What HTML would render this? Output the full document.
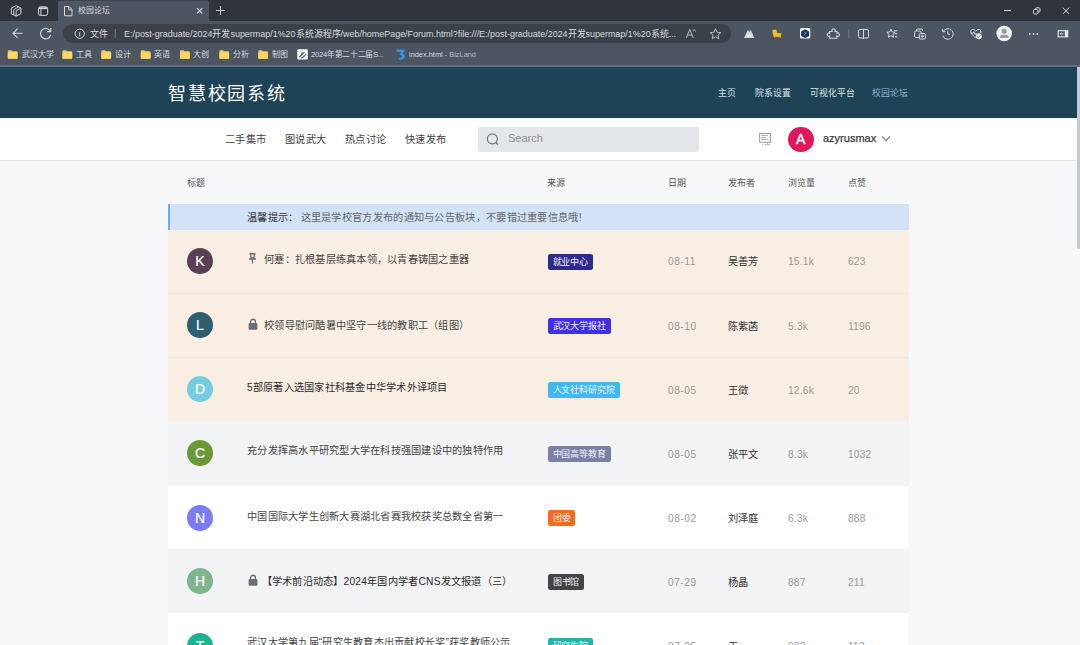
<!DOCTYPE html>
<html lang="zh-CN"><head><meta charset="utf-8">
<style>
*{margin:0;padding:0;box-sizing:border-box}
html,body{width:1080px;height:645px;overflow:hidden;background:#f7f8fa;font-family:"Liberation Sans",sans-serif}
.abs{position:absolute}
.ui{color:#d9dcdf;font-size:8px;white-space:nowrap;position:absolute;line-height:10px}
#hdr{position:absolute;left:0;top:66.8px;width:1076.5px;height:50.8px;background:#1f4356}
#nav{position:absolute;left:0;top:117.6px;width:1076px;height:43.9px;background:#fff;border-bottom:1px solid #e3e5e9}
#sb{position:absolute;left:1076.5px;top:66.8px;width:3.5px;height:182.7px;background:#c5c8cd;border-radius:0 0 2px 2px}
.t{position:absolute;white-space:nowrap;line-height:1}
.row{position:absolute;left:168px;width:741px}
.av{position:absolute;left:19px;width:26px;height:26px;border-radius:50%;color:#fff;font-size:14px;text-align:center;line-height:26px;-webkit-text-stroke:0.2px #fff}
.tag{position:absolute;left:380px;height:16px;border-radius:2.5px;color:#f4f4f8;font-size:9px;letter-spacing:-0.1px;line-height:16px;padding:0 4.6px;white-space:nowrap}
.ttl{position:absolute;left:79px;font-size:10.2px;letter-spacing:0.25px;color:#444;white-space:nowrap;line-height:12px}
.dt{position:absolute;left:500px;margin-top:1px;letter-spacing:0.5px;font-size:10.2px;color:#999;line-height:12px}
.au{position:absolute;left:560px;margin-top:1px;font-size:10.2px;color:#333;line-height:12px}
.vw{position:absolute;left:620px;margin-top:1px;letter-spacing:0.2px;font-size:10.2px;color:#999;line-height:12px}
.lk{position:absolute;left:680px;margin-top:1px;letter-spacing:0.2px;font-size:10.2px;color:#999;line-height:12px}
</style></head><body>
<svg class="abs" style="left:0;top:0" width="1080" height="67" viewBox="0 0 1080 67">
 <rect width="1080" height="21" fill="#30353d"/>
 <rect y="21" width="1080" height="44" fill="#4d5562"/>
 <path d="M56.5,21 Q58,21 58,19.5 V2 Q58,0.5 59.5,0.5 H207.5 Q209,0.5 209,2 V19.5 Q209,21 210.5,21 Z" fill="#4d5562"/>
 <rect x="63" y="24" width="668" height="19" rx="9.5" fill="#3b4049"/>
 <rect y="65" width="1080" height="2" fill="#666c76"/>
 <g fill="none" stroke="#d5d8dc" stroke-width="1">
  <!-- workspaces -->
  <path d="M16.1,5.6 L20.9,8.1 V13.7 L16.1,16.1 L11.3,13.7 V8.1 Z"/>
  <path d="M13.7,14.9 V9.6 L18.5,7.1 M16.1,16 V10.8 L20.8,8.3" stroke-width="0.9"/>
  <!-- tab actions -->
  <rect x="38.5" y="6.8" width="9.2" height="8.6" rx="2"/>
  <path d="M39,8.2 H47.2" stroke-width="1.8"/>
  <path d="M40.9,9 V15"/>
  <!-- page icon -->
  <path d="M64.5,6.5 H69 L72,9.5 V15.8 H64.5 Z M68.8,6.5 V9.8 H72"/>
  <!-- tab close -->
  <path d="M197,8.2 L202.3,13.5 M202.3,8.2 L197,13.5" stroke="#cfd2d6" stroke-width="1.1"/>
  <!-- new tab -->
  <path d="M220.5,6 V15 M216,10.5 H225" stroke="#c9ccd0" stroke-width="1"/>
  <!-- window controls -->
  <path d="M1004,10.5 H1011"/>
  <rect x="1033.5" y="9.5" width="4.5" height="4.5" rx="1.2"/>
  <path d="M1035.5,9.5 V8.8 Q1035.5,7.8 1036.5,7.8 H1039 Q1040,7.8 1040,8.8 V11.2 Q1040,12 1039,12 H1038"/>
  <path d="M1062.8,7.6 L1069.2,14 M1069.2,7.6 L1062.8,14"/>
  <!-- back -->
  <path d="M22.5,33.3 H13 M17.6,28.7 L13,33.3 L17.6,37.9" stroke-width="1.1"/>
  <!-- refresh -->
  <path d="M50.3,31.2 A5.2,5.2 0 1 0 50.7,35" stroke-width="1.1"/>
  <path d="M50.8,28 V31.6 H47.2" stroke-width="1.1"/>
  <!-- info -->
  <circle cx="79.7" cy="33.7" r="4.6"/>
  <path d="M79.7,32.3 V36.3"/>
  <!-- read aloud -->
  <path d="M686.3,38 L689.8,29.3 L693.3,38 M687.6,35 H692" stroke="#b9bdc3"/>
  <path d="M693.2,31.3 L694.2,29.5 L695.5,31.5" stroke="#b9bdc3" stroke-width="0.8"/>
  <!-- star -->
  <path d="M715.5,28.8 L717.1,32.3 L720.9,32.6 L718,35.1 L718.9,38.8 L715.5,36.8 L712.1,38.8 L713,35.1 L710.1,32.6 L713.9,32.3 Z" stroke="#b9bdc3"/>
  <!-- puzzle -->
  <path d="M829.6,31.5 H832.2 A1.7,1.7 0 1 1 835,31.5 H836.9 V33.2 A1.7,1.7 0 1 1 836.9,36 V38.3 H829.6 V36.1 A1.6,1.6 0 1 1 829.6,33.3 Z" stroke="#d5d8dc" stroke-width="1.05"/>
  <path d="M848.7,29 V38.5" stroke="#6c737d"/>
  <!-- split screen -->
  <rect x="858.5" y="29.5" width="10" height="8.5" rx="1.5"/>
  <path d="M863.5,28.8 V38.8"/>
  <!-- favorites -->
  <path d="M891,29.2 L892.3,32 L895.2,32.3 L893,34.3 L893.6,37.3 L891,35.8 L888.4,37.3 L889,34.3 L886.8,32.3 L889.7,32 Z"/>
  <path d="M894,30.8 H897.3 M895,33.8 H897.3 M895,36.8 H897.3"/>
  <!-- collections -->
  <path d="M916.5,31 V30 Q916.5,29 917.5,29 H921.5 Q922.5,29 922.5,30 V31"/>
  <rect x="914.6" y="31" width="6.5" height="6.5" rx="1.2"/>
  <rect x="919.3" y="33.5" width="6" height="5.5" rx="1" fill="#4d5562"/>
  <path d="M922.3,34.6 V37.9 M920.6,36.25 H924"/>
  <!-- history -->
  <path d="M943.2,31.5 A5.3,5.3 0 1 1 942.8,35.5"/>
  <path d="M942.6,29 V31.8 H945.4"/>
  <path d="M947.8,31 V34.2 H950"/>
  <!-- health -->
  <path d="M975.8,31.2 Q974,28.5 971.8,29.6 Q969.6,31 971.3,33.8 L975.8,38 L977,36.8 M975.8,31.2 Q977.6,28.5 979.8,29.6 Q981.5,30.7 980.8,33" />
  <path d="M970.8,33.2 H973 L974,31.8 L975.2,34.6 L976.2,33.2"/>
 </g>
 <circle cx="978.8" cy="36.3" r="3" fill="#e6e8ea"/>
 <path d="M977.4,36.4 L978.4,37.3 L980.2,35.4" fill="none" stroke="#4d5562" stroke-width="0.9"/>
 <!-- profile -->
 <circle cx="1004.2" cy="33.5" r="7.8" fill="#f2f2f2"/>
 <circle cx="1004.2" cy="31.2" r="2.6" fill="#9b9b9b"/>
 <path d="M999.8,37.9 Q1000,34.7 1002,34.7 H1006.4 Q1008.4,34.7 1008.6,37.9 Z" fill="#9b9b9b"/>
 <!-- more -->
 <g fill="#d5d8dc"><circle cx="1029.8" cy="34" r="0.9"/><circle cx="1033.6" cy="34" r="0.9"/><circle cx="1037.4" cy="34" r="0.9"/></g>
 <!-- sidebar -->
 <rect x="1057.6" y="30.1" width="10.7" height="7.3" fill="#e8eaec"/>
 <rect x="1058.8" y="31.2" width="6" height="5.1" fill="#4d5562"/>
 <path d="M1063.5,33.75 H1060.2 M1061.5,32.5 L1060.2,33.75 L1061.5,35" stroke="#e8eaec" stroke-width="0.8" fill="none"/>
 <!-- mountain -->
 <path d="M744,37.9 L747.9,29.8 L749.25,32.2 L750.6,29.8 L754.4,37.9 Z" fill="#d6d7d9"/>
 <path d="M747,36.5 L749.2,33.5 L751.5,36.5 Z" fill="#eeeeef"/>
 <!-- duck -->
 <path d="M772.3,29.9 L776.4,29.6 L777,33 L782,33.3 L780.6,35 L781.3,37.2 L777,36.8 L774,37.3 L773.2,35 L772.5,32.6 Z" fill="#f0c21a"/>
 <path d="M773.4,35.6 L774.2,37.3 L777,36.8 L781.3,37.2" fill="none" stroke="#d98a1a" stroke-width="0.8"/>
 <!-- blue ext -->
 <rect x="800" y="28" width="10.3" height="10.4" rx="1.5" fill="#f4f4f6"/>
 <path d="M805.15,29.3 L809.1,31.5 V35.9 L805.15,38 L801.2,35.9 V31.5 Z" fill="#183358"/>
 <path d="M804,31.8 L806.2,33.4 L804,35" stroke="#9fb4d6" stroke-width="0.7" fill="none"/>
 <!-- folders -->
 <g>
 <path d="M7.8,51.2 Q7.8,50.3 8.7,50.3 H11.4 L12.3,51.3 H16.6 Q17.5,51.3 17.5,52.2 V57.8 Q17.5,58.7 16.6,58.7 H8.7 Q7.8,58.7 7.8,57.8 Z" fill="#f5c84f"/><rect x="7.8" y="52.3" width="9.7" height="6.4" rx="0.8" fill="#fcd866"/>
<path d="M62.5,51.2 Q62.5,50.3 63.4,50.3 H66.1 L67.0,51.3 H71.3 Q72.2,51.3 72.2,52.2 V57.8 Q72.2,58.7 71.3,58.7 H63.4 Q62.5,58.7 62.5,57.8 Z" fill="#f5c84f"/><rect x="62.5" y="52.3" width="9.7" height="6.4" rx="0.8" fill="#fcd866"/>
<path d="M101.4,51.2 Q101.4,50.3 102.30000000000001,50.3 H105.0 L105.9,51.3 H110.2 Q111.10000000000001,51.3 111.10000000000001,52.2 V57.8 Q111.10000000000001,58.7 110.2,58.7 H102.30000000000001 Q101.4,58.7 101.4,57.8 Z" fill="#f5c84f"/><rect x="101.4" y="52.3" width="9.7" height="6.4" rx="0.8" fill="#fcd866"/>
<path d="M140.8,51.2 Q140.8,50.3 141.70000000000002,50.3 H144.4 L145.3,51.3 H149.60000000000002 Q150.5,51.3 150.5,52.2 V57.8 Q150.5,58.7 149.60000000000002,58.7 H141.70000000000002 Q140.8,58.7 140.8,57.8 Z" fill="#f5c84f"/><rect x="140.8" y="52.3" width="9.7" height="6.4" rx="0.8" fill="#fcd866"/>
<path d="M180,51.2 Q180,50.3 180.9,50.3 H183.6 L184.5,51.3 H188.8 Q189.7,51.3 189.7,52.2 V57.8 Q189.7,58.7 188.8,58.7 H180.9 Q180,58.7 180,57.8 Z" fill="#f5c84f"/><rect x="180" y="52.3" width="9.7" height="6.4" rx="0.8" fill="#fcd866"/>
<path d="M219.4,51.2 Q219.4,50.3 220.3,50.3 H223.0 L223.9,51.3 H228.20000000000002 Q229.1,51.3 229.1,52.2 V57.8 Q229.1,58.7 228.20000000000002,58.7 H220.3 Q219.4,58.7 219.4,57.8 Z" fill="#f5c84f"/><rect x="219.4" y="52.3" width="9.7" height="6.4" rx="0.8" fill="#fcd866"/>
<path d="M258.3,51.2 Q258.3,50.3 259.2,50.3 H261.90000000000003 L262.8,51.3 H267.1 Q268.0,51.3 268.0,52.2 V57.8 Q268.0,58.7 267.1,58.7 H259.2 Q258.3,58.7 258.3,57.8 Z" fill="#f5c84f"/><rect x="258.3" y="52.3" width="9.7" height="6.4" rx="0.8" fill="#fcd866"/>
 </g>
 <rect x="297.3" y="49.3" width="10.5" height="10.3" rx="1" fill="#f8f8f8"/>
 <path d="M299,56.5 Q301,53 305,52 Q303,55 299.5,57.5 Z" fill="#d82a2a"/>
 <path d="M300.5,58 Q303.5,56.5 306.3,53.5 Q305.5,57 301.5,58.5 Z" fill="#2a5fd8"/>
 <circle cx="302.5" cy="53.2" r="1.2" fill="#2aa84a"/>
 <path d="M396,49.5 H404 Q405.6,49.6 404.4,51.2 L402.2,53.8 Q405.8,54.5 404.5,57.3 Q403,59.8 399.3,59.8 L398.2,58.3 Q401.8,58.4 402.3,56.6 Q402.6,55.2 399.2,55 L401.6,51.8 H397.5 Z" fill="#2aa0e8"/>
</svg>
<div class="ui" style="left:78px;top:6px;width:32.02px;text-align:justify;text-align-last:justify">校园论坛</div>
<div class="ui" style="left:90px;top:29px;font-size:9px;width:18.02px;text-align:justify;text-align-last:justify">文件</div>
<div class="ui" style="left:114px;top:28px;font-size:9px;color:#8d939b">|</div>
<div class="ui" style="left:124px;top:29px;font-size:8.95px">E:/post-graduate/2024开发supermap/1%20系统源程序/web/homePage/Forum.html?file:///E:/post-graduate/2024开发supermap/1%20系统...</div>
<div class="ui" style="left:22px;top:50px;width:32.02px;text-align:justify;text-align-last:justify">武汉大学</div>
<div class="ui" style="left:76px;top:50px;width:16.02px;text-align:justify;text-align-last:justify">工具</div>
<div class="ui" style="left:115px;top:50px;width:16.02px;text-align:justify;text-align-last:justify">设计</div>
<div class="ui" style="left:154px;top:50px;width:16.02px;text-align:justify;text-align-last:justify">英语</div>
<div class="ui" style="left:193px;top:50px;width:16.02px;text-align:justify;text-align-last:justify">大创</div>
<div class="ui" style="left:233px;top:50px;width:16.02px;text-align:justify;text-align-last:justify">分析</div>
<div class="ui" style="left:272px;top:50px;width:16.02px;text-align:justify;text-align-last:justify">制图</div>
<div class="ui" style="left:311px;top:50px;font-size:7.7px;letter-spacing:-0.3px;width:72.46px;text-align:justify;text-align-last:justify">2024年第二十二届S...</div>
<div class="ui" style="left:409px;top:50px;font-size:7.4px">index.html <span style="color:#b9bdc3">- BizLand</span></div>

<!-- page header -->
<div id="hdr"></div>
<div class="t" style="left:168px;top:84.5px;font-size:18px;letter-spacing:1.8px;color:#fff;width:118.83px;text-align:justify;text-align-last:justify">智慧校园系统</div>
<div class="t" style="left:718px;top:89px;font-size:8.8px;color:#dde3e7;width:18.02px;text-align:justify;text-align-last:justify">主页</div>
<div class="t" style="left:755px;top:89px;font-size:8.8px;color:#dde3e7;width:36.02px;text-align:justify;text-align-last:justify">院系设置</div>
<div class="t" style="left:810px;top:89px;font-size:8.8px;color:#dde3e7;width:45.02px;text-align:justify;text-align-last:justify">可视化平台</div>
<div class="t" style="left:872px;top:89px;font-size:8.8px;color:#8cb8d4;width:36.02px;text-align:justify;text-align-last:justify">校园论坛</div>

<div id="nav"></div>
<div class="t" style="left:225px;top:134.5px;font-size:10.2px;letter-spacing:0.25px;color:#3e3e3e;width:41.02px;text-align:justify;text-align-last:justify">二手集市</div>
<div class="t" style="left:285px;top:134.5px;font-size:10.2px;letter-spacing:0.25px;color:#3e3e3e;width:41.02px;text-align:justify;text-align-last:justify">图说武大</div>
<div class="t" style="left:345px;top:134.5px;font-size:10.2px;letter-spacing:0.25px;color:#3e3e3e;width:41.02px;text-align:justify;text-align-last:justify">热点讨论</div>
<div class="t" style="left:405px;top:134.5px;font-size:10.2px;letter-spacing:0.25px;color:#3e3e3e;width:41.02px;text-align:justify;text-align-last:justify">快速发布</div>
<div class="abs" style="left:478px;top:127px;width:221px;height:25px;background:#e3e7ea;border-radius:2px"></div>
<div class="t" style="left:508px;top:133px;font-size:11px;color:#8a8f94">Search</div>
<svg class="abs" style="left:485px;top:132px" width="16" height="14" viewBox="0 0 16 14"><circle cx="7.3" cy="6.9" r="5" fill="none" stroke="#6f757b" stroke-width="1.1"/><path d="M10.8,10.5 L12.8,12.5" stroke="#6f757b" stroke-width="1.2"/></svg>
<svg class="abs" style="left:754px;top:128px" width="22" height="22" viewBox="0 0 22 22"><rect x="5.6" y="5.5" width="10.8" height="8.8" fill="none" stroke="#9ea2a6" stroke-width="1.1"/><path d="M7.2,7.5 H14 M7.2,9.6 H12 M7.2,11.4 H14" stroke="#a9adb1" stroke-width="0.9"/><path d="M12.8,14.5 L14,16.3 M8,16.6 H9.5 M10.8,16.6 H16" stroke="#a9adb1" stroke-width="0.9" fill="none"/></svg>
<svg class="abs" style="left:880px;top:134px" width="12" height="9" viewBox="0 0 12 9"><path d="M2,2.5 L6,6.5 L10,2.5" fill="none" stroke="#7d8287" stroke-width="1.1"/></svg>
<div class="abs" style="left:788px;top:126.5px;width:25.5px;height:25.5px;border-radius:50%;background:#e0175b;color:#fff;font-size:14px;line-height:25.5px;text-align:center;-webkit-text-stroke:0.4px #fff">A</div>
<div class="t" style="left:823px;top:133.3px;font-size:11px;color:#3a3d40;-webkit-text-stroke:0.25px #3a3d40">azyrusmax</div>


<div id="sb"></div>

<!-- table header -->
<div class="t" style="left:187px;top:179px;font-size:9px;color:#555;width:18.02px;text-align:justify;text-align-last:justify">标题</div>
<div class="t" style="left:547px;top:179px;font-size:9px;color:#555;width:18.02px;text-align:justify;text-align-last:justify">来源</div>
<div class="t" style="left:668px;top:179px;font-size:9px;color:#555;width:18.02px;text-align:justify;text-align-last:justify">日期</div>
<div class="t" style="left:728px;top:179px;font-size:9px;color:#555;width:27.02px;text-align:justify;text-align-last:justify">发布者</div>
<div class="t" style="left:788px;top:179px;font-size:9px;color:#555;width:27.02px;text-align:justify;text-align-last:justify">浏览量</div>
<div class="t" style="left:848px;top:179px;font-size:9px;color:#555;width:18.02px;text-align:justify;text-align-last:justify">点赞</div>

<!-- notice -->
<div class="abs" style="left:168.2px;top:204.3px;width:740.8px;height:25.4px;background:#d2e3f8;border-left:2px solid #78a8e6"></div>
<div class="t" style="left:247px;top:211.8px;font-size:10.2px;letter-spacing:0.3px;color:#333;line-height:12px;width:334.75px;text-align:justify;text-align-last:justify">温馨提示：<span style="color:#666;margin-left:2px">这里是学校官方发布的通知与公告板块，不要错过重要信息哦!</span></div>

<div class="row" style="top:229.8px;height:64.2px;background:#f9eee3;border-bottom:1px solid #f3e8dd">
 <div class="av" style="top:18px;background:#5a4055">K</div>
 <div class="ttl" style="top:23.5px;width:222.02px;text-align:justify;text-align-last:justify"><svg width="9" height="11" viewBox="0 0 9 11" style="vertical-align:-1px;margin-right:7px;margin-left:1px;vertical-align:-1px"><path d="M1.5,0.8 H7.5 M2.8,0.8 V5 H6.2 V0.8 M1,6 H8 M4.5,6 V10.5" fill="none" stroke="#6e7276" stroke-width="1.4"/></svg>何蹇：扎根基层练真本领，以青春铸国之重器</div>
 <div class="tag" style="top:24px;background:#2d2a8a;width:44.82px;text-align:justify;text-align-last:justify">就业中心</div>
 <div class="dt" style="top:25px">08-11</div><div class="au" style="top:25px;width:30.02px;text-align:justify;text-align-last:justify">吴善芳</div><div class="vw" style="top:25px">15.1k</div><div class="lk" style="top:25px">623</div>
</div>
<div class="row" style="top:294px;height:64px;background:#f9eee3;border-bottom:1px solid #e7e8e8">
 <div class="av" style="top:18px;background:#2d5f70">L</div>
 <div class="ttl" style="top:24px;width:222.02px;text-align:justify;text-align-last:justify"><svg width="10" height="12" viewBox="0 0 10 12" style="vertical-align:-1px;margin-left:1px;margin-right:6px"><path d="M2.6,5.5 V3.6 A2.4,2.4 0 0 1 7.4,3.6 V5.5" fill="none" stroke="#6b6f73" stroke-width="1.4"/><rect x="0.6" y="5" width="8.8" height="6.8" rx="1.1" fill="#6b6f73"/></svg>校领导慰问酷暑中坚守一线的教职工（组图）</div>
 <div class="tag" style="top:23.8px;background:#3f2fe6;width:62.61px;text-align:justify;text-align-last:justify">武汉大学报社</div>
 <div class="dt" style="top:26px">08-10</div><div class="au" style="top:26px;width:30.02px;text-align:justify;text-align-last:justify">陈紫菡</div><div class="vw" style="top:26px">5.3k</div><div class="lk" style="top:26px">1196</div>
</div>
<div class="row" style="top:358px;height:62.9px;background:#f9eee3">
 <div class="av" style="top:18.4px;background:#73cfe0">D</div>
 <div class="ttl" style="top:23.8px;font-weight:500;color:#2a2a2a;width:200.69px;text-align:justify;text-align-last:justify">5部原著入选国家社科基金中华学术外译项目</div>
 <div class="tag" style="top:23.7px;background:#3fb8f0;width:71.52px;text-align:justify;text-align-last:justify">人文社科研究院</div>
 <div class="dt" style="top:26px">08-05</div><div class="au" style="top:26px;width:20.02px;text-align:justify;text-align-last:justify">王徵</div><div class="vw" style="top:26px">12.6k</div><div class="lk" style="top:26px">20</div>
</div>
<div class="row" style="top:420.9px;height:64.7px;background:#f2f3f5">
 <div class="av" style="top:19.5px;background:#6a9a35">C</div>
 <div class="ttl" style="top:24.5px;width:256.27px;text-align:justify;text-align-last:justify">充分发挥高水平研究型大学在科技强国建设中的独特作用</div>
 <div class="tag" style="top:25px;background:#7a80a8;width:62.61px;text-align:justify;text-align-last:justify">中国高等教育</div>
 <div class="dt" style="top:27px">08-05</div><div class="au" style="top:27px;width:30.02px;text-align:justify;text-align-last:justify">张平文</div><div class="vw" style="top:27px">8.3k</div><div class="lk" style="top:27px">1032</div>
</div>
<div class="row" style="top:485.6px;height:62.9px;background:#ffffff">
 <div class="av" style="top:19px;background:#7b7cf5">N</div>
 <div class="ttl" style="top:25.3px;width:256.27px;text-align:justify;text-align-last:justify">中国国际大学生创新大赛湖北省赛我校获奖总数全省第一</div>
 <div class="tag" style="top:24.5px;background:#f26b21;width:27.02px;text-align:justify;text-align-last:justify">团委</div>
 <div class="dt" style="top:26px">08-02</div><div class="au" style="top:26px;width:30.02px;text-align:justify;text-align-last:justify">刘泽庭</div><div class="vw" style="top:26px">6.3k</div><div class="lk" style="top:26px">888</div>
</div>
<div class="row" style="top:548.5px;height:64.5px;background:#f2f3f5">
 <div class="av" style="top:19.5px;background:#7fb58e">H</div>
 <div class="ttl" style="top:25px;font-weight:500;color:#2a2a2a;width:265.46px;text-align:justify;text-align-last:justify"><svg width="10" height="12" viewBox="0 0 10 12" style="vertical-align:-1px;margin-left:1px;margin-right:3.5px"><path d="M2.6,5.5 V3.6 A2.4,2.4 0 0 1 7.4,3.6 V5.5" fill="none" stroke="#6b6f73" stroke-width="1.4"/><rect x="0.6" y="5" width="8.8" height="6.8" rx="1.1" fill="#6b6f73"/></svg>【学术前沿动态】2024年国内学者CNS发文报道（三）</div>
 <div class="tag" style="top:25px;background:#444;width:35.91px;text-align:justify;text-align-last:justify">图书馆</div>
 <div class="dt" style="top:27px">07-29</div><div class="au" style="top:27px;width:20.02px;text-align:justify;text-align-last:justify">杨晶</div><div class="vw" style="top:27px">887</div><div class="lk" style="top:27px">211</div>
</div>
<div class="row" style="top:613px;height:64px;background:#ffffff">
 <div class="av" style="top:19.5px;background:#1ab394">T</div>
 <div class="ttl" style="top:24px;width:263.57px;text-align:justify;text-align-last:justify">武汉大学第九届“研究生教育杰出贡献校长奖”获奖教师公示</div>
 <div class="tag" style="top:25px;background:#1fb5a8;width:44.82px;text-align:justify;text-align-last:justify">研究生院</div>
 <div class="dt" style="top:27px">07-25</div><div class="au" style="top:27px;width:10.02px;text-align:justify;text-align-last:justify">王</div><div class="vw" style="top:27px">982</div><div class="lk" style="top:27px">112</div>
</div>
</body></html>
